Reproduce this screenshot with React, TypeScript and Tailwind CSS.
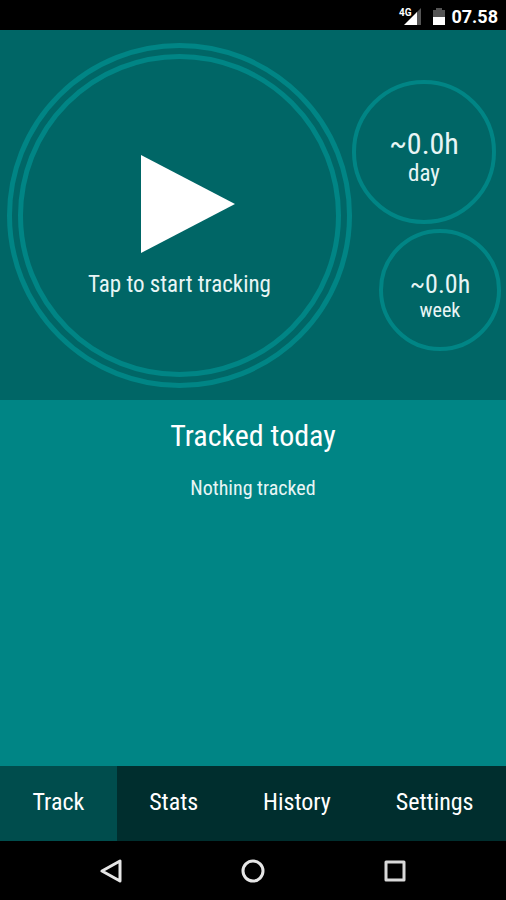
import { useState } from 'react'

const tabs = ['Track', 'Stats', 'History', 'Settings']

function StatusBar() {
  return (
    <header className="flex h-[30px] items-center justify-end bg-black pt-1 pr-2 font-['Roboto',sans-serif] text-white">
      <div className="flex h-5 items-start">
        <span className="text-[10px] leading-3 font-bold">4G</span>
        <svg className="-ml-2 h-5 w-5" viewBox="0 0 20 20">
          <path d="M18 1v17h-5V6z" fill="#555" />
          <path d="M14 5v13H1z" fill="#fff" />
        </svg>
      </div>
      <svg className="ml-2 h-5 w-4" viewBox="0 0 16 20">
        <path d="M2 3h3V1h6v2h3v8H2z" fill="#555" />
        <path d="M2 10h12v8H2z" fill="#fff" />
      </svg>
      <span className="ml-1 text-lg leading-6 font-bold">07.58</span>
    </header>
  )
}

export default function App() {
  const [activeTab, setActiveTab] = useState('Track')

  return (
    <div className="flex min-h-screen flex-col bg-[#008585] font-['Roboto_Condensed','Liberation_Sans_Narrow','DejaVu_Sans_Condensed',sans-serif] text-[#e8f5f5]">
      <StatusBar />

      {/* Timer and totals */}
      <section className="flex items-center justify-center bg-[#006666] pt-[13px] pr-[5px] pb-3 pl-[7px]">
        <button className="aspect-square max-w-[480px] flex-1 rounded-full border-[5px] border-[#008585] p-[6px]">
          <span className="flex h-full w-full flex-col items-center justify-center gap-4 rounded-full border-[5px] border-[#008585] pt-6">
            <svg className="h-[98px] w-[110px]" viewBox="0 0 110 98">
              <path d="M16 0L110 49L16 98z" fill="#fff" />
            </svg>
            <span className="text-[23px] leading-8">Tap to start tracking</span>
          </span>
        </button>
        <div className="flex w-[149px] flex-col gap-[5px]">
          <div className="flex h-36 w-36 flex-col items-center justify-center rounded-full border-4 border-[#008585] pt-3">
            <span className="text-[30px] leading-8">~0.0h</span>
            <span className="text-[23px] leading-7">day</span>
          </div>
          <div className="flex h-[122px] w-[122px] flex-col items-center justify-center self-end rounded-full border-4 border-[#008585] pt-3">
            <span className="text-[26px] leading-7">~0.0h</span>
            <span className="text-xl leading-6">week</span>
          </div>
        </div>
      </section>

      {/* Entries of the day */}
      <main className="flex flex-1 flex-col items-center pt-4">
        <h1 className="text-[30px] leading-10 text-white">Tracked today</h1>
        <p className="mt-4 text-xl leading-8">Nothing tracked</p>
      </main>

      <nav className="flex h-[75px] bg-[#002e2e]">
        {tabs.map((tab) => (
          <button
            key={tab}
            onClick={() => setActiveTab(tab)}
            className={`flex-auto pb-1 text-2xl text-white ${activeTab === tab ? 'bg-[#004d4d]' : ''}`}
          >
            {tab}
          </button>
        ))}
      </nav>

      {/* Android navigation */}
      <footer className="flex h-[59px] items-center justify-center gap-[118px] bg-black">
        <button aria-label="Back">
          <svg className="h-6 w-6" viewBox="0 0 24 24" fill="none" stroke="#e6e6e6" strokeWidth="3" strokeLinejoin="round">
            <path d="M21 2v20L3 12z" />
          </svg>
        </button>
        <button aria-label="Home">
          <svg className="h-6 w-6" viewBox="0 0 24 24" fill="none" stroke="#e6e6e6" strokeWidth="3">
            <circle cx="12" cy="12" r="10" />
          </svg>
        </button>
        <button aria-label="Recent apps">
          <svg className="h-6 w-6" viewBox="0 0 24 24" fill="none" stroke="#d9d9d9" strokeWidth="3" strokeLinejoin="round">
            <path d="M3 3h18v18H3z" />
          </svg>
        </button>
      </footer>
    </div>
  )
}
